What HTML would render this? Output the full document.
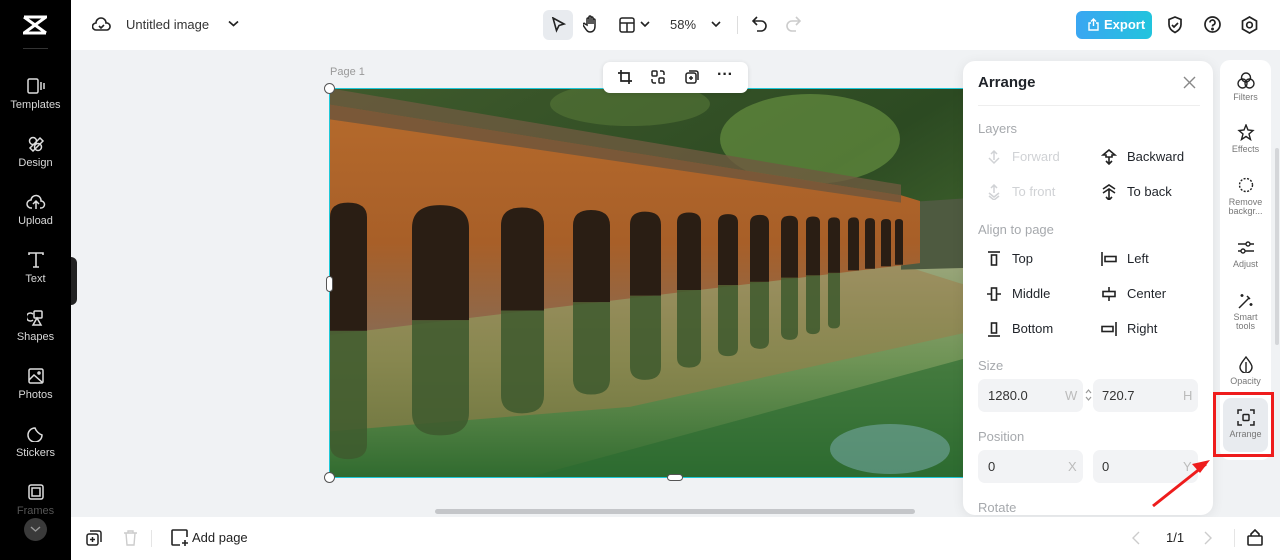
<!DOCTYPE html>
<html><head><meta charset="utf-8">
<style>
*{box-sizing:border-box;margin:0;padding:0}
body{width:1280px;height:560px;overflow:hidden;background:#f0f2f4;font-family:"Liberation Sans",sans-serif;position:relative;color:#1f2329}
.abs{position:absolute}
.side{left:0;top:0;width:71px;height:560px;background:#000}
.nav{position:absolute;left:0;width:71px;text-align:center;color:#d8d8d8;font-size:11px}
.nav svg{display:block;margin:0 auto 5px}
.top{left:71px;top:0;width:1209px;height:50px;background:#fff}
.bot{left:71px;top:517px;width:1209px;height:43px;background:#fff}
.t{position:absolute;white-space:nowrap}
.panel{left:963px;top:61px;width:250px;height:454px;background:#fff;border-radius:12px;box-shadow:0 2px 12px rgba(0,0,0,.08);overflow:hidden}
.sec{position:absolute;left:15px;font-size:13px;color:#a6a9ad}
.it{position:absolute;font-size:13px;color:#1f2329}
.it svg{position:absolute;left:-26px;top:0}
.inp{position:absolute;height:33px;width:105px;background:#f2f3f5;border-radius:7px;font-size:13px;color:#333}
.rt{left:1220px;top:60px;width:51px;height:400px;background:#fff;border-radius:10px}
.ri{position:absolute;left:0;width:51px;text-align:center;font-size:9px;color:#777;line-height:9px}
.ri svg{display:block;margin:0 auto 4px}
</style></head><body>

<svg class="abs" style="left:330px;top:89px" width="633" height="388" viewBox="0 0 633 388">
<defs>
<linearGradient id="w" x1="0" y1="0" x2="0" y2="1"><stop offset="0" stop-color="#9aa57a"/><stop offset=".45" stop-color="#6f9456"/><stop offset="1" stop-color="#2f6a2e"/></linearGradient>
<linearGradient id="tr" x1="0" y1="0" x2="1" y2="1"><stop offset="0" stop-color="#3f5a2c"/><stop offset=".5" stop-color="#2c4a22"/><stop offset="1" stop-color="#56803a"/></linearGradient>
<linearGradient id="br" x1="0" y1="0" x2="0" y2="1"><stop offset="0" stop-color="#b56a2c"/><stop offset=".6" stop-color="#a85f28"/><stop offset="1" stop-color="#8a6a50"/></linearGradient>
</defs>
<rect width="633" height="388" fill="url(#tr)"/>
<ellipse cx="480" cy="50" rx="90" ry="45" fill="#6e9a45" opacity=".6"/>
<ellipse cx="300" cy="15" rx="80" ry="22" fill="#5c7e3a" opacity=".5"/>
<rect y="175" width="633" height="213" fill="url(#w)"/>
<g transform="matrix(1 0 0 0.8167 0 -0.7)">
<polygon points="0,300 571,216 633,214 633,480 0,480" fill="url(#w)"/>
<polygon points="0,300 571,216 633,240 633,300 300,390 0,420" fill="#a07a48" opacity=".5"/>
<polygon points="571,140 633,135 633,220 571,222" fill="#4e5a40"/>
<polygon points="0,20 571,131 590,138 590,214 0,302" fill="url(#br)"/>
<polygon points="0,20 571,131 571,140 0,38" fill="#7a5838"/>
<polygon points="0,0 571,118 571,131 0,20" fill="#6e5a40" opacity=".8"/>
<g fill="#2a1e14">
<path d="M0 297V158Q0 140 18 140Q37 140 37 158V297Z"/>
<path d="M82 284V171Q82 143 110 143Q139 143 139 171V284Z"/>
<path d="M171 272V168Q171 146 192 146Q214 146 214 168V272Z"/>
<path d="M243 262V168Q243 149 261 149Q280 149 280 168V262Z"/>
<path d="M300 254V167Q300 151 315 151Q331 151 331 167V254Z"/>
<path d="M347 247V164Q347 152 359 152Q371 152 371 164V247Z"/>
<path d="M388 241V164Q388 154 398 154Q408 154 408 164V241Z"/>
<path d="M420 237V165Q420 155 430 155Q439 155 439 165V237Z"/>
<path d="M451 232V165Q451 156 460 156Q468 156 468 165V232Z"/>
<path d="M476 229V164Q476 157 483 157Q490 157 490 164V229Z"/>
<path d="M498 226V164Q498 158 504 158Q510 158 510 164V226Z"/>
<path d="M518 223V164Q518 158 524 158Q529 158 529 164V223Z"/>
<path d="M535 221V164Q535 159 540 159Q545 159 545 164V221Z"/>
<path d="M551 218V165Q551 160 556 160Q561 160 561 165V218Z"/>
<path d="M565 216V164Q565 160 569 160Q573 160 573 164V216Z"/>
</g>
<g fill="#3e5a2e" opacity=".85">
<path d="M0 297V436Q0 454 18 454Q37 454 37 436V297Z"/>
<path d="M82 284V397Q82 425 110 425Q139 425 139 397V284Z"/>
<path d="M171 272V376Q171 398 192 398Q214 398 214 376V272Z"/>
<path d="M243 262V356Q243 375 261 375Q280 375 280 356V262Z"/>
<path d="M300 254V341Q300 357 315 357Q331 357 331 341V254Z"/>
<path d="M347 247V330Q347 342 359 342Q371 342 371 330V247Z"/>
<path d="M388 241V318Q388 328 398 328Q408 328 408 318V241Z"/>
<path d="M420 237V309Q420 319 430 319Q439 319 439 309V237Z"/>
<path d="M451 232V299Q451 308 460 308Q468 308 468 299V232Z"/>
<path d="M476 229V294Q476 301 483 301Q490 301 490 294V229Z"/>
<path d="M498 226V288Q498 294 504 294Q510 294 510 288V226Z"/>
</g>
</g>
<polygon points="200,388 633,270 633,388" fill="#2a6a30" opacity=".6"/>
<ellipse cx="560" cy="360" rx="60" ry="25" fill="#7fb2b8" opacity=".5"/>
</svg>
<div class="abs" style="left:329px;top:88px;width:700px;height:390px;border:1.5px solid #1ec8d8"></div>
<div class="abs" style="left:324px;top:83px;width:11px;height:11px;border-radius:50%;background:#fff;border:1px solid #555"></div>
<div class="abs" style="left:324px;top:472px;width:11px;height:11px;border-radius:50%;background:#fff;border:1px solid #555"></div>
<div class="abs" style="left:326px;top:276px;width:7px;height:16px;border-radius:4px;background:#fff;border:1px solid #555"></div>
<div class="abs" style="left:667px;top:474px;width:16px;height:7px;border-radius:4px;background:#fff;border:1px solid #555"></div>
<div class="t" style="left:330px;top:66px;font-size:11px;color:#999">Page 1</div>
<div class="abs" style="left:603px;top:62px;width:145px;height:31px;background:#fff;border-radius:7px;box-shadow:0 1px 5px rgba(0,0,0,.12)">
<svg class="abs" style="left:14px;top:7px" width="16" height="16" fill="none" stroke="#222" stroke-width="1.7"><path d="M4 1v11h11M1 4h11v11"/></svg>
<svg class="abs" style="left:47px;top:7px" width="16" height="16" fill="none" stroke="#222" stroke-width="1.5"><rect x="2" y="2" width="5" height="5" rx="1"/><rect x="9" y="9" width="5" height="5" rx="1"/><path d="M10 2h2a2 2 0 0 1 2 2v2M6 14H4a2 2 0 0 1-2-2v-2"/></svg>
<svg class="abs" style="left:81px;top:7px" width="16" height="16" fill="none" stroke="#222" stroke-width="1.5"><rect x="2" y="4" width="10" height="10" rx="2"/><path d="M5 2h7a2 2 0 0 1 2 2v7M7 7v4M5 9h4"/></svg>
<div class="t" style="left:114px;top:4px;font-size:16px;font-weight:bold;color:#222">···</div>
</div>

<div class="abs side">
<svg class="abs" style="left:23px;top:15px" width="24" height="20" fill="none" stroke="#fff" stroke-width="3"><path d="M1 2h22L1 18h22"/><path d="M1 2l22 16"/></svg>
<div class="abs" style="left:23px;top:48px;width:25px;height:1px;background:#333"></div>
<div class="nav" style="top:78px"><svg width="18" height="16" fill="none" stroke="#ddd" stroke-width="1.5"><rect x="1" y="1" width="10" height="14" rx="1.5"/><path d="M14 4v8M17 5v6"/></svg>Templates</div>
<div class="nav" style="top:136px"><svg width="18" height="16" fill="none" stroke="#ddd" stroke-width="1.5"><circle cx="6" cy="5" r="3.5"/><circle cx="11" cy="11" r="3.5"/><path d="M13 2l3 3-10 10-3-3z"/></svg>Design</div>
<div class="nav" style="top:194px"><svg width="20" height="16" fill="none" stroke="#ddd" stroke-width="1.5"><path d="M6 14H5a4 4 0 0 1 0-8 5 5 0 0 1 10 1 3.5 3.5 0 0 1 0 7h-1M10 15V8M7 10l3-3 3 3"/></svg>Upload</div>
<div class="nav" style="top:252px"><svg width="18" height="16" fill="none" stroke="#ddd" stroke-width="1.6"><path d="M2 3V1h14v2M9 1v14M6 15h6"/></svg>Text</div>
<div class="nav" style="top:310px"><svg width="18" height="16" fill="none" stroke="#ddd" stroke-width="1.5"><path d="M6 4a4 4 0 1 0 0 6"/><rect x="7" y="1" width="8" height="7" rx="1"/><path d="M10 8l-4 7h8z"/></svg>Shapes</div>
<div class="nav" style="top:368px"><svg width="18" height="16" fill="none" stroke="#ddd" stroke-width="1.5"><rect x="2" y="1" width="14" height="14" rx="1.5"/><path d="M2 12l5-5 9 8"/><circle cx="12" cy="5" r="1"/></svg>Photos</div>
<div class="nav" style="top:426px"><svg width="18" height="16" fill="none" stroke="#ddd" stroke-width="1.5"><path d="M15 9A7 7 0 1 1 8 2c1 3 4 6 7 7z"/></svg>Stickers</div>
<div class="nav" style="top:484px;color:#555"><svg width="18" height="16" fill="none" stroke="#ddd" stroke-width="1.5"><rect x="2" y="1" width="14" height="14" rx="2"/><rect x="5" y="4" width="8" height="8"/></svg>Frames</div>
<div class="abs" style="left:24px;top:518px;width:23px;height:23px;border-radius:50%;background:#3a3a3a"><svg class="abs" style="left:6px;top:8px" width="11" height="7" fill="none" stroke="#999" stroke-width="1.4"><path d="M1 1l4.5 4 4.5-4"/></svg></div>
</div>
<div class="abs" style="left:71px;top:257px;width:6px;height:48px;background:#222;border-radius:0 6px 6px 0"></div>

<div class="abs top">
<svg class="abs" style="left:21px;top:16px" width="19" height="16" fill="none" stroke="#222" stroke-width="1.6"><path d="M5 14H4a3.5 3.5 0 0 1 0-7 5 5 0 0 1 10 0 3.5 3.5 0 0 1 1 7H5zM7 10l2 2 3-3"/></svg>
<div class="t" style="left:55px;top:17px;font-size:13px;color:#333">Untitled image</div>
<svg class="abs" style="left:157px;top:20px" width="11" height="8" fill="none" stroke="#222" stroke-width="1.7"><path d="M1 1.5l4.5 4 4.5-4"/></svg>
<div class="abs" style="left:472px;top:10px;width:30px;height:30px;background:#e8ebef;border-radius:6px"></div>
<svg class="abs" style="left:480px;top:17px" width="15" height="17" fill="none" stroke="#222" stroke-width="1.6"><path d="M2 1l11 6-5 1.5-2.5 5z"/></svg>
<svg class="abs" style="left:512px;top:15px" width="16" height="18" fill="none" stroke="#222" stroke-width="1.5"><path d="M4 10V4a1 1 0 0 1 2 0v5V2a1 1 0 0 1 2 0v7V3a1 1 0 0 1 2 0v6V5a1 1 0 0 1 2 0v6c0 4-2 6-5 6-2 0-3-1-5-4l-2-3a1 1 0 0 1 2-1z"/></svg>
<svg class="abs" style="left:548px;top:17px" width="16" height="16" fill="none" stroke="#222" stroke-width="1.5"><rect x="1" y="1" width="14" height="14" rx="2"/><path d="M1 6h14M8 6v9"/></svg>
<svg class="abs" style="left:569px;top:21px" width="10" height="7" fill="none" stroke="#222" stroke-width="1.6"><path d="M1 1l4 4 4-4"/></svg>
<div class="t" style="left:599px;top:17px;font-size:13px;color:#333">58%</div>
<svg class="abs" style="left:640px;top:21px" width="10" height="7" fill="none" stroke="#222" stroke-width="1.6"><path d="M1 1l4 4 4-4"/></svg>
<div class="abs" style="left:666px;top:16px;width:1px;height:18px;background:#ddd"></div>
<svg class="abs" style="left:681px;top:16px" width="16" height="16" fill="none" stroke="#222" stroke-width="1.6"><path d="M5 1L1 5l4 4M1 5h8a5 5 0 0 1 0 10H5"/></svg>
<svg class="abs" style="left:714px;top:16px" width="16" height="16" fill="none" stroke="#ccc" stroke-width="1.6"><path d="M11 1l4 4-4 4M15 5H7a5 5 0 0 0 0 10h4"/></svg>
<div class="abs" style="left:1005px;top:11px;width:76px;height:28px;border-radius:6px;background:linear-gradient(90deg,#3aa6f2,#22c4dd)"></div>
<svg class="abs" style="left:1016px;top:18px" width="13" height="13" fill="none" stroke="#fff" stroke-width="1.4"><path d="M4 5H2v7h9V5H9M6.5 8V1M4 3.5l2.5-2.5 2.5 2.5"/></svg>
<div class="t" style="left:1033px;top:17px;font-size:13px;font-weight:bold;color:#fff">Export</div>
<svg class="abs" style="left:1096px;top:16px" width="16" height="18" fill="none" stroke="#222" stroke-width="1.7"><path d="M8 1l6 2.5v5c0 4-3 6.5-6 8-3-1.5-6-4-6-8v-5zM5 9l2 2 4-4"/></svg>
<svg class="abs" style="left:1133px;top:16px" width="17" height="17" fill="none" stroke="#222" stroke-width="1.7"><circle cx="8.5" cy="8.5" r="7.5"/><path d="M6 6.5a2.5 2.5 0 1 1 3.5 2.3c-.8.4-1 .9-1 1.7"/><circle cx="8.5" cy="13" r=".6" fill="#222"/></svg>
<svg class="abs" style="left:1170px;top:16px" width="17" height="18" fill="none" stroke="#222" stroke-width="1.7"><path d="M8.5 1l7 4v8l-7 4-7-4V5z"/><circle cx="8.5" cy="9" r="2.8"/></svg>
</div>

<div class="abs panel">
<div class="t" style="left:15px;top:13px;font-size:15px;font-weight:bold;color:#1f2329">Arrange</div>
<svg class="abs" style="left:220px;top:15px" width="13" height="13" fill="none" stroke="#888" stroke-width="1.4"><path d="M1 1l11 11M12 1L1 12"/></svg>
<div class="abs" style="left:15px;top:44px;width:222px;height:1px;background:#eee"></div>
<div class="sec" style="top:60px">Layers</div>
<div class="it" style="left:49px;top:88px;color:#d0d2d5"><svg width="16" height="16" fill="none" stroke="#d0d2d5" stroke-width="1.5"><path d="M8 11V2M5 5l3-3 3 3M3 9l5 5 5-5"/></svg>Forward</div>
<div class="it" style="left:164px;top:88px"><svg width="16" height="16" fill="none" stroke="#222" stroke-width="1.6"><path d="M8 1L2 6h3v2h6V6h3zM8 8v7M5 12l3 3 3-3"/></svg>Backward</div>
<div class="it" style="left:49px;top:123px;color:#d0d2d5"><svg width="16" height="16" fill="none" stroke="#d0d2d5" stroke-width="1.5"><path d="M8 9V1M5 4l3-3 3 3M3 9l5 4 5-4M3 12l5 4 5-4"/></svg>To front</div>
<div class="it" style="left:164px;top:123px"><svg width="16" height="16" fill="none" stroke="#222" stroke-width="1.6"><path d="M2 5l6-4 6 4M2 9l6-4 6 4M8 6v10M5 13l3 3 3-3"/></svg>To back</div>
<div class="sec" style="top:161px">Align to page</div>
<div class="it" style="left:49px;top:190px"><svg width="16" height="16" fill="none" stroke="#222" stroke-width="1.6"><path d="M2 1h12"/><rect x="5.5" y="4" width="5" height="10"/></svg>Top</div>
<div class="it" style="left:164px;top:190px"><svg width="16" height="16" fill="none" stroke="#222" stroke-width="1.6"><path d="M1 1v14"/><rect x="4" y="5.5" width="11" height="5"/></svg>Left</div>
<div class="it" style="left:49px;top:225px"><svg width="16" height="16" fill="none" stroke="#222" stroke-width="1.6"><path d="M1 8h4M11 8h4"/><rect x="5.5" y="2" width="5" height="12"/></svg>Middle</div>
<div class="it" style="left:164px;top:225px"><svg width="16" height="16" fill="none" stroke="#222" stroke-width="1.6"><path d="M8 1v4M8 11v4"/><rect x="2" y="5.5" width="12" height="5"/></svg>Center</div>
<div class="it" style="left:49px;top:260px"><svg width="16" height="16" fill="none" stroke="#222" stroke-width="1.6"><path d="M2 15h12"/><rect x="5.5" y="2" width="5" height="10"/></svg>Bottom</div>
<div class="it" style="left:164px;top:260px"><svg width="16" height="16" fill="none" stroke="#222" stroke-width="1.6"><path d="M15 1v14"/><rect x="1" y="5.5" width="11" height="5"/></svg>Right</div>
<div class="sec" style="top:297px">Size</div>
<div class="inp" style="left:15px;top:318px"><span class="t" style="left:10px;top:9px">1280.0</span><span class="t" style="left:87px;top:9px;color:#bbb">W</span></div>
<svg class="abs" style="left:122px;top:328px" width="7" height="12" fill="none" stroke="#999" stroke-width="1.2"><path d="M1 4l2.5-3 2.5 3M1 8l2.5 3 2.5-3"/></svg>
<div class="inp" style="left:130px;top:318px"><span class="t" style="left:9px;top:9px">720.7</span><span class="t" style="left:90px;top:9px;color:#bbb">H</span></div>
<div class="sec" style="top:368px">Position</div>
<div class="inp" style="left:15px;top:389px"><span class="t" style="left:10px;top:9px">0</span><span class="t" style="left:90px;top:9px;color:#bbb">X</span></div>
<div class="inp" style="left:130px;top:389px"><span class="t" style="left:9px;top:9px">0</span><span class="t" style="left:90px;top:9px;color:#bbb">Y</span></div>
<div class="sec" style="top:439px">Rotate</div>
</div>

<div class="abs rt">
<div class="ri" style="top:12px"><svg width="18" height="17" fill="none" stroke="#222" stroke-width="1.4"><circle cx="9" cy="5.5" r="4.5"/><circle cx="5.5" cy="11.5" r="4.5"/><circle cx="12.5" cy="11.5" r="4.5"/></svg>Filters</div>
<div class="ri" style="top:64px"><svg width="18" height="17" fill="none" stroke="#222" stroke-width="1.4"><path d="M9 1l2 5 5 .5-4 3.5 1.5 5.5L9 12.5 4.5 15.5 6 10 2 6.5 7 6z"/></svg>Effects</div>
<div class="ri" style="top:117px"><svg width="18" height="17" fill="none" stroke="#222" stroke-width="1.4" stroke-dasharray="2 1.5"><circle cx="9" cy="8" r="6.5"/></svg>Remove<br>backgr...</div>
<div class="ri" style="top:179px"><svg width="18" height="17" fill="none" stroke="#222" stroke-width="1.4"><path d="M1 5h16M1 12h16"/><circle cx="11" cy="5" r="2" fill="#fff"/><circle cx="6" cy="12" r="2" fill="#fff"/></svg>Adjust</div>
<div class="ri" style="top:232px"><svg width="18" height="17" fill="none" stroke="#222" stroke-width="1.5"><path d="M2 16L12 6M10 4l3 3M5 2v3M3.5 3.5h3M14 11v3M12.5 12.5h3"/></svg>Smart<br>tools</div>
<div class="ri" style="top:296px"><svg width="18" height="17" fill="none" stroke="#222" stroke-width="1.4"><path d="M9 1C6 5 3 8 3 11a6 6 0 0 0 12 0c0-3-3-6-6-10zM9 6v10"/></svg>Opacity</div>
<div class="abs" style="left:3px;top:338px;width:45px;height:54px;background:#e8ebef;border-radius:8px"></div>
<div class="ri" style="top:349px"><svg width="18" height="17" fill="none" stroke="#222" stroke-width="1.5"><path d="M1 5V1h4M13 1h4v4M17 12v4h-4M5 16H1v-4"/><rect x="6" y="5.5" width="6" height="6" rx="1"/></svg>Arrange</div>
</div>
<div class="abs" style="left:1275px;top:148px;width:4px;height:197px;background:#d4d6d9;border-radius:2px"></div>
<div class="abs" style="left:1213px;top:392px;width:61px;height:65px;border:3px solid #ee1c1c"></div>
<svg class="abs" style="left:1148px;top:452px" width="70" height="60"><path d="M5 54L58 12" stroke="#ee1c1c" stroke-width="3"/><path d="M62 8l-18 4 8 9z" fill="#ee1c1c"/></svg>
<div class="abs" style="left:435px;top:509px;width:480px;height:5px;background:#c4c6c9;border-radius:3px"></div>

<div class="abs bot">
<svg class="abs" style="left:15px;top:13px" width="16" height="16" fill="none" stroke="#222" stroke-width="1.5"><rect x="1" y="4" width="11" height="11" rx="2"/><path d="M4 1h9a2 2 0 0 1 2 2v9M6.5 7v5M4 9.5h5"/></svg>
<svg class="abs" style="left:52px;top:13px" width="15" height="16" fill="none" stroke="#ccc" stroke-width="1.4"><path d="M1 3h13M5 3V1h5v2M3 3l1 12h7l1-12"/></svg>
<div class="abs" style="left:80px;top:13px;width:1px;height:17px;background:#e5e5e5"></div>
<svg class="abs" style="left:100px;top:12px" width="18" height="18" fill="none" stroke="#222" stroke-width="1.6"><path d="M16 8V2a1 1 0 0 0-1-1H2a1 1 0 0 0-1 1v13a1 1 0 0 0 1 1h7M14 11v6M11 14h6"/></svg>
<div class="t" style="left:121px;top:13px;font-size:13px;color:#222">Add page</div>
<svg class="abs" style="left:1061px;top:14px" width="8" height="14" fill="none" stroke="#ccc" stroke-width="1.4"><path d="M7 1L1 7l6 6"/></svg>
<div class="t" style="left:1095px;top:13px;font-size:13px;color:#222">1/1</div>
<svg class="abs" style="left:1133px;top:14px" width="8" height="14" fill="none" stroke="#ccc" stroke-width="1.4"><path d="M1 1l6 6-6 6"/></svg>
<div class="abs" style="left:1163px;top:12px;width:1px;height:18px;background:#e5e5e5"></div>
<svg class="abs" style="left:1176px;top:12px" width="16" height="17" fill="none" stroke="#222" stroke-width="1.6"><rect x="1" y="7" width="14" height="9" rx="1"/><path d="M4 7V5l4-4 4 4v2"/></svg>
</div>
</body></html>
